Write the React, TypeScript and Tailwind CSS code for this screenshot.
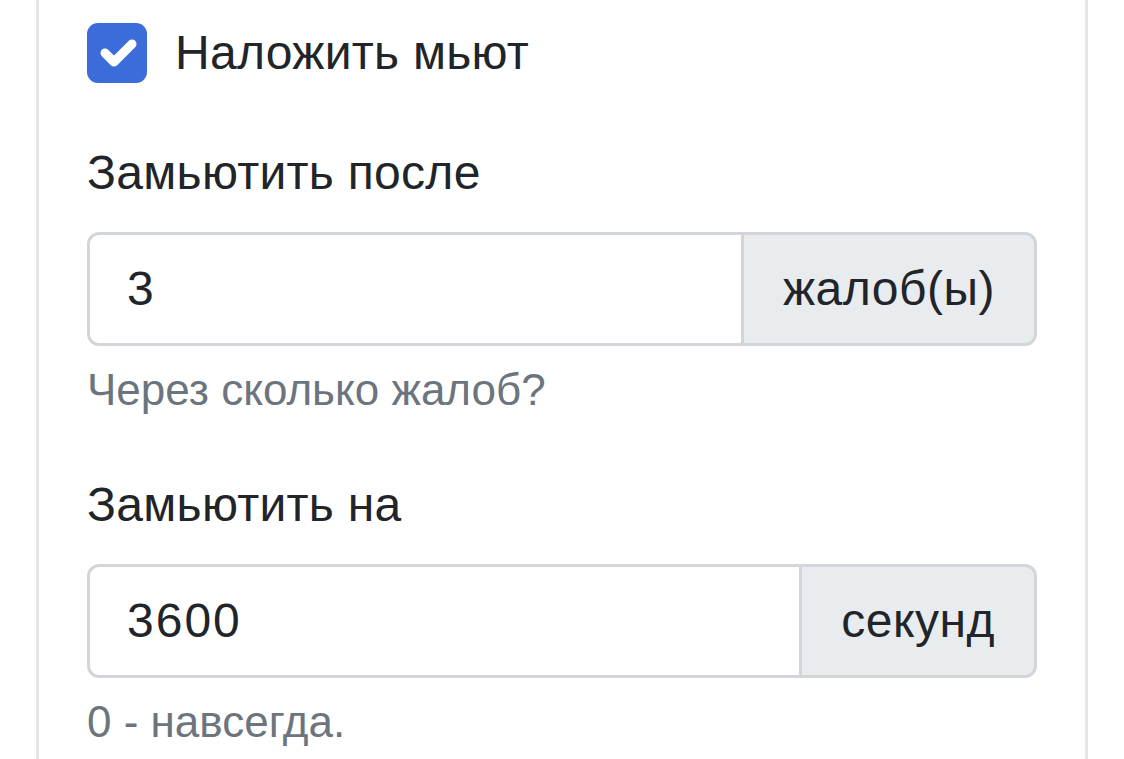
import React from "react";

const fields = [
  { label: "Замьютить после", value: "3", unit: "жалоб(ы)", help: "Через сколько жалоб?" },
  { label: "Замьютить на", value: "3600", unit: "секунд", help: "0 - навсегда." },
];

const App = () => {
  return (
    <div
      className="h-[759px] w-[1124px] overflow-hidden bg-white text-[#212529]"
      style={{ fontFamily: '"Liberation Sans", Arial, sans-serif' }}
    >
      <div className="ml-[36px] mr-[36px] h-full border-x-[3px] border-[#e3e5e8] px-[48px] pt-[17px]">
        <label className="flex h-[72px] items-center gap-[28px] text-[48px]">
          <span className="flex h-[60px] w-[60px] shrink-0 items-center justify-center rounded-[11px] bg-[#3b6cd9]">
            <svg viewBox="0 0 20 20" className="h-[60px] w-[60px]">
              <path d="m6 10 3 3 6-6" fill="none" stroke="#fff" strokeWidth="3" strokeLinecap="round" strokeLinejoin="round" />
            </svg>
          </span>
          <span className="leading-[72px] tracking-[0.3px]">Наложить мьют</span>
        </label>

        {fields.map((f) => (
          <div key={f.label} className="mt-[48px]">
            <div className="text-[48px] leading-[72px] tracking-[0.3px]">{f.label}</div>
            <div className="mt-[23px] flex h-[114px] w-full">
              <div className="flex flex-1 items-center rounded-l-[12px] border-[3px] border-[#d2d6db] bg-white pl-[37px] text-[48px] tracking-[2px]">
                {f.value}
              </div>
              <div className="flex items-center rounded-r-[12px] border-[3px] border-l-0 border-[#d2d6db] bg-[#e9ecef] px-[39px] text-[48px] tracking-[0.5px]">
                {f.unit}
              </div>
            </div>
            <div className="mt-[12px] text-[44px] leading-[63px] text-[#6c757d]">{f.help}</div>
          </div>
        ))}
      </div>
    </div>
  );
};

export default App;
